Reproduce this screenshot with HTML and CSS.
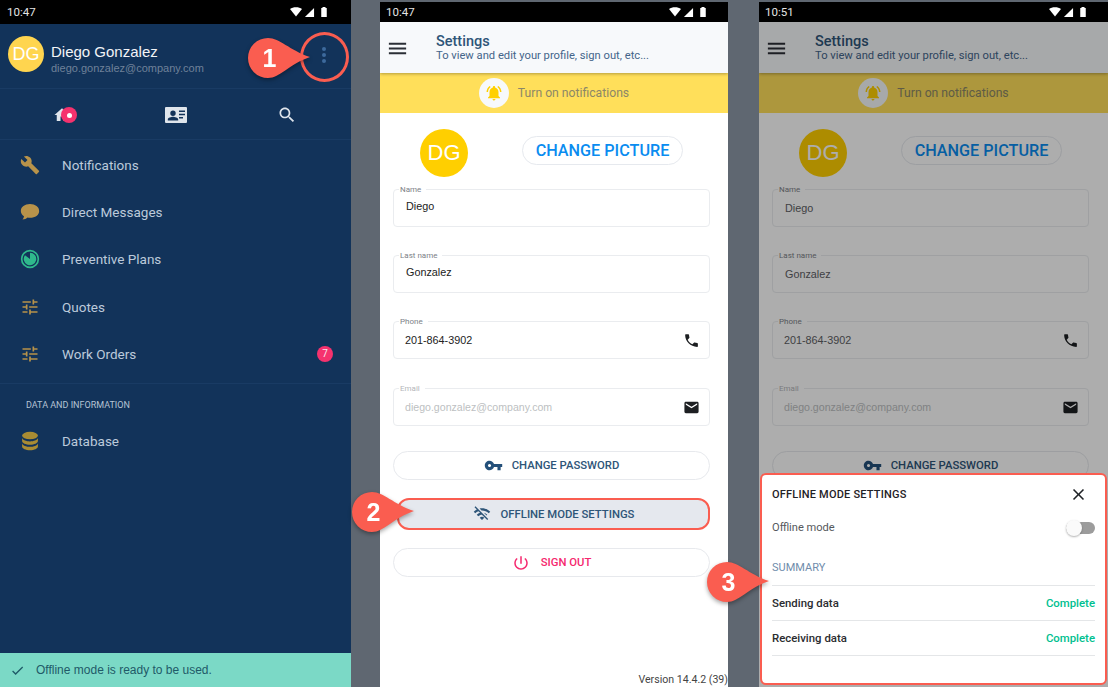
FILE: index.html
```html
<!DOCTYPE html>
<html lang="en">
<head>
<meta charset="utf-8">
<title>Offline mode settings</title>
<link rel="stylesheet" href="styles.css">
</head>
<body>
<svg class="defs" aria-hidden="true">
  <symbol id="i-wifi" viewBox="0 0 24 24"><path d="M12 21 0 6c6-5 18-5 24 0z"/></symbol>
  <symbol id="i-signal" viewBox="0 0 24 24"><path d="M22 2v20H2z"/></symbol>
  <symbol id="i-battery" viewBox="0 0 24 24"><path d="M9 2h6v2h2.500v18h-11V4H9z"/></symbol>
  <symbol id="i-home" viewBox="0 0 24 24"><path d="M10 20v-6h4v6h5v-8h3L12 3 2 12h3v8z"/></symbol>
  <symbol id="i-card" viewBox="0 0 24 24"><path fill-rule="evenodd" d="M2 4h20a1 1 0 0 1 1 1v14a1 1 0 0 1-1 1H2a1 1 0 0 1-1-1V5a1 1 0 0 1 1-1zm7 3.500a2.700 2.700 0 1 0 0 5.400a2.700 2.700 0 0 0 0-5.400zM3.800 17.500h10.400v-1c0-1.800-3.500-2.700-5.200-2.700s-5.200.9-5.200 2.700zM15 7.500v1.500h6V7.500zm0 3.300v1.500h6v-1.500zm0 3.300v1.500h4v-1.500z"/></symbol>
  <symbol id="i-search" viewBox="0 0 24 24"><path d="M15.500 14h-.79l-.28-.27C15.410 12.590 16 11.110 16 9.500 16 5.910 13.090 3 9.500 3S3 5.910 3 9.500 5.910 16 9.500 16c1.610 0 3.090-.59 4.230-1.570l.27.28v.79l5 4.990L20.490 19l-4.990-5zm-6 0C7.010 14 5 11.990 5 9.500S7.010 5 9.500 5 14 7.010 14 9.500 11.990 14 9.500 14z"/></symbol>
  <symbol id="i-wrench" viewBox="0 0 24 24"><path d="M22.700 19l-9.100-9.100c.9-2.300.4-5-1.500-6.900-2-2-5-2.400-7.400-1.300L9 6 6 9 1.600 4.700C.4 7.100.9 10.100 2.900 12.100c1.900 1.900 4.600 2.400 6.900 1.500l9.100 9.100c.4.4 1 .4 1.400 0l2.300-2.300c.5-.4.5-1.100.1-1.400z"/></symbol>
  <symbol id="i-chat" viewBox="0 0 24 24"><path d="M12 2.500c6.300 0 11 3.500 11 8.200s-4.700 8.200-11 8.200c-1 0-2-.1-2.900-.3-1.500 1.500-3.600 2.400-6.100 2.400 1-1.200 1.600-2.500 1.800-4C2.500 15.500 1 13.200 1 10.700c0-4.700 4.700-8.200 11-8.200z"/></symbol>
  <symbol id="i-timer" viewBox="0 0 24 24"><path fill-rule="evenodd" d="M12 1a11 11 0 1 1 0 22 11 11 0 0 1 0-22zm0 2a9 9 0 1 0 0 18 9 9 0 0 0 0-18z"/><path d="M12 4.500a7.500 7.500 0 1 1-6 3L12 12z"/></symbol>
  <symbol id="i-tune" viewBox="0 0 24 24"><path d="M3 17v2h6v-2H3zM3 5v2h10V5H3zm10 16v-2h8v-2h-8v-2h-2v6h2zM7 9v2H3v2h4v2h2V9H7zm14 4v-2H11v2h10zm-6-4h2V7h4V5h-4V3h-2v6z"/></symbol>
  <symbol id="i-db" viewBox="0 0 24 24"><ellipse cx="12" cy="5.500" rx="9.500" ry="4.500"/><path d="M2.500 8.500c1 2.700 5 4 9.500 4s8.500-1.300 9.500-4v3.500c0 2.500-4.300 4.500-9.500 4.500S2.500 14.500 2.500 12z"/><path d="M2.500 15c1 2.700 5 4 9.500 4s8.500-1.300 9.500-4v3.500c0 2.500-4.300 4.500-9.500 4.500s-9.500-2-9.500-4.500z"/></symbol>
  <symbol id="i-check" viewBox="0 0 24 24"><path d="M9 16.170L4.830 12l-1.420 1.410L9 19 21 7l-1.410-1.410z"/></symbol>
  <symbol id="i-menu" viewBox="0 0 24 24"><path d="M3 18h18v-2H3v2zm0-5h18v-2H3v2zm0-7v2h18V6H3z"/></symbol>
  <symbol id="i-bell" viewBox="0 0 24 24"><path d="M7.580 4.080L6.150 2.650C3.750 4.480 2.170 7.300 2.030 10.500h2c.15-2.650 1.510-4.970 3.550-6.420zm12.390 6.420h2c-.15-3.200-1.730-6.020-4.120-7.850l-1.420 1.430c2.020 1.450 3.390 3.770 3.540 6.420zM18 11c0-3.070-1.640-5.640-4.500-6.320V4c0-.83-.67-1.500-1.500-1.500s-1.500.67-1.500 1.500v.68C7.630 5.360 6 7.920 6 11v5l-2 2v1h16v-1l-2-2v-5zm-6 11c.14 0 .27-.01.4-.04.65-.14 1.180-.58 1.440-1.180.1-.24.15-.5.15-.78h-4c.01 1.100.9 2 2.010 2z"/></symbol>
  <symbol id="i-phone" viewBox="0 0 24 24"><path d="M6.620 10.790c1.440 2.830 3.760 5.140 6.590 6.590l2.200-2.200c.27-.27.67-.36 1.020-.24 1.120.37 2.330.57 3.570.57.55 0 1 .45 1 1V20c0 .55-.45 1-1 1-9.390 0-17-7.610-17-17 0-.55.45-1 1-1h3.500c.55 0 1 .45 1 1 0 1.250.2 2.450.57 3.570.11.35.03.74-.25 1.020l-2.200 2.200z"/></symbol>
  <symbol id="i-mail" viewBox="0 0 24 24"><path d="M20 4H4c-1.100 0-1.990.9-1.990 2L2 18c0 1.100.9 2 2 2h16c1.100 0 2-.9 2-2V6c0-1.100-.9-2-2-2zm0 4l-8 5-8-5V6l8 5 8-5v2z"/></symbol>
  <symbol id="i-key" viewBox="0 0 24 24"><path d="M12.650 10C11.830 7.670 9.610 6 7 6c-3.310 0-6 2.690-6 6s2.690 6 6 6c2.610 0 4.830-1.670 5.650-4H17v4h4v-4h2v-4H12.650zM7 14c-1.100 0-2-.9-2-2s.9-2 2-2 2 .9 2 2-.9 2-2 2z"/></symbol>
  <symbol id="i-wifioff" viewBox="0 0 24 24"><path d="M22.990 9C19.150 5.160 13.800 3.760 8.840 4.780l2.520 2.520c3.470-.17 6.990 1.050 9.630 3.700l2-2.010zm-4 4c-1.290-1.290-2.840-2.130-4.490-2.560l3.530 3.530.96-.97zM2 3.050L5.070 6.100C3.600 6.820 2.220 7.780 1 9l1.990 2c1.240-1.240 2.670-2.160 4.200-2.770l2.240 2.240C7.810 10.890 6.270 11.730 5 13v.01L6.990 15c1.360-1.360 3.140-2.040 4.920-2.060L18.980 20l1.270-1.260L3.290 1.790 2 3.050zM9 17l3 3 3-3c-1.650-1.660-4.340-1.660-6 0z"/></symbol>
  <symbol id="i-power" viewBox="0 0 24 24"><path d="M13 3h-2v10h2V3zm4.830 2.170l-1.420 1.420C17.990 7.860 19 9.810 19 12c0 3.870-3.130 7-7 7s-7-3.130-7-7c0-2.190 1.010-4.140 2.580-5.420L6.170 5.170C4.230 6.820 3 9.260 3 12c0 4.970 4.030 9 9 9s9-4.030 9-9c0-2.740-1.230-5.180-3.170-6.830z"/></symbol>
  <symbol id="i-close" viewBox="0 0 24 24"><path d="M19 6.410L17.590 5 12 10.590 6.410 5 5 6.410 10.590 12 5 17.590 6.410 19 12 13.410 17.590 19 19 17.590 13.410 12z"/></symbol>
  <symbol id="i-drop" viewBox="0 0 62 40"><path d="M20 0C32 0 41 12 62 19 41 26 32 40 20 40A20 20 0 0 1 20 0z"/></symbol>
</svg>

<main class="page">
  <section class="phone phone-drawer">
    <div class="status status-tall">
      <span class="status-time">10:47</span>
      <span class="status-icons">
        <svg class="st-wifi"><use href="#i-wifi"/></svg>
        <svg class="st-signal"><use href="#i-signal"/></svg>
        <svg class="st-batt"><use href="#i-battery"/></svg>
      </span>
    </div>
    <header class="drawer-head">
      <div class="drawer-avatar">DG</div>
      <div class="drawer-user">
        <div class="drawer-name">Diego Gonzalez</div>
        <div class="drawer-mail">diego.gonzalez@company.com</div>
      </div>
      <div class="more-dots"><i></i><i></i><i></i></div>
    </header>
    <div class="drawer-tabs">
      <span class="tab">
        <svg class="tab-icon tab-home"><use href="#i-home"/></svg>
        <span class="home-badge"><i></i></span>
      </span>
      <span class="tab"><svg class="tab-icon tab-card"><use href="#i-card"/></svg></span>
      <span class="tab"><svg class="tab-icon"><use href="#i-search"/></svg></span>
    </div>
    <nav class="nav">
      <a class="nav-item"><svg class="nav-icon tan"><use href="#i-wrench"/></svg><span>Notifications</span></a>
      <a class="nav-item"><svg class="nav-icon tan"><use href="#i-chat"/></svg><span>Direct Messages</span></a>
      <a class="nav-item"><svg class="nav-icon green"><use href="#i-timer"/></svg><span>Preventive Plans</span></a>
      <a class="nav-item"><svg class="nav-icon tan"><use href="#i-tune"/></svg><span>Quotes</span></a>
      <a class="nav-item"><svg class="nav-icon tan"><use href="#i-tune"/></svg><span>Work Orders</span><b class="count">7</b></a>
    </nav>
    <div class="nav-section">
      <div class="nav-label">DATA AND INFORMATION</div>
      <a class="nav-item"><svg class="nav-icon gold"><use href="#i-db"/></svg><span>Database</span></a>
    </div>
    <footer class="ready">
      <svg class="ready-icon"><use href="#i-check"/></svg>
      <span>Offline mode is ready to be used.</span>
    </footer>
  </section>

  <section class="phone phone-settings">
    <div class="status">
      <span class="status-time">10:47</span>
      <span class="status-icons">
        <svg class="st-wifi"><use href="#i-wifi"/></svg>
        <svg class="st-signal"><use href="#i-signal"/></svg>
        <svg class="st-batt"><use href="#i-battery"/></svg>
      </span>
    </div>
    <div class="screen">
      <header class="appbar">
        <svg class="menu-icon"><use href="#i-menu"/></svg>
        <div>
          <div class="appbar-title">Settings</div>
          <div class="appbar-sub">To view and edit your profile, sign out, etc...</div>
        </div>
      </header>
      <div class="banner">
        <span class="bell"><svg><use href="#i-bell"/></svg></span>
        <span>Turn on notifications</span>
      </div>
      <div class="profile">
        <div class="avatar">DG</div>
        <button class="pic-btn">CHANGE PICTURE</button>
      </div>
      <div class="form">
        <div class="field field-top"><label>Name</label><span class="value">Diego</span></div>
        <div class="field field-top"><label>Last name</label><span class="value">Gonzalez</span></div>
        <div class="field"><label>Phone</label><span class="value value-tight">201-864-3902</span><svg class="field-icon"><use href="#i-phone"/></svg></div>
        <div class="field field-off"><label>Email</label><span class="value value-tight">diego.gonzalez@company.com</span><svg class="field-icon"><use href="#i-mail"/></svg></div>
        <button class="pill pill-first"><svg class="pill-key"><use href="#i-key"/></svg>CHANGE PASSWORD</button>
        <button class="pill pill-hot"><svg class="pill-wifi"><use href="#i-wifioff"/></svg>OFFLINE MODE SETTINGS</button>
        <button class="pill pill-out"><svg class="pill-power"><use href="#i-power"/></svg>SIGN OUT</button>
      </div>
      <div class="version">Version 14.4.2 (39)</div>
    </div>
  </section>

  <section class="phone phone-sheet">
    <div class="status">
      <span class="status-time">10:51</span>
      <span class="status-icons">
        <svg class="st-wifi"><use href="#i-wifi"/></svg>
        <svg class="st-signal"><use href="#i-signal"/></svg>
        <svg class="st-batt"><use href="#i-battery"/></svg>
      </span>
    </div>
    <div class="screen">
      <header class="appbar">
        <svg class="menu-icon"><use href="#i-menu"/></svg>
        <div>
          <div class="appbar-title">Settings</div>
          <div class="appbar-sub">To view and edit your profile, sign out, etc...</div>
        </div>
      </header>
      <div class="banner">
        <span class="bell"><svg><use href="#i-bell"/></svg></span>
        <span>Turn on notifications</span>
      </div>
      <div class="profile">
        <div class="avatar">DG</div>
        <button class="pic-btn">CHANGE PICTURE</button>
      </div>
      <div class="form">
        <div class="field"><label>Name</label><span class="value value-dim">Diego</span></div>
        <div class="field"><label>Last name</label><span class="value value-dim">Gonzalez</span></div>
        <div class="field"><label>Phone</label><span class="value value-tight value-dim">201-864-3902</span><svg class="field-icon"><use href="#i-phone"/></svg></div>
        <div class="field field-off"><label>Email</label><span class="value value-tight">diego.gonzalez@company.com</span><svg class="field-icon"><use href="#i-mail"/></svg></div>
        <button class="pill pill-first"><svg class="pill-key"><use href="#i-key"/></svg>CHANGE PASSWORD</button>
      </div>
      <div class="scrim"></div>
      <aside class="sheet">
        <div class="sheet-head">
          <strong>OFFLINE MODE SETTINGS</strong>
          <svg class="sheet-close"><use href="#i-close"/></svg>
        </div>
        <div class="sheet-toggle">
          <span>Offline mode</span>
          <span class="switch"><i></i></span>
        </div>
        <div class="sheet-summary">SUMMARY</div>
        <div class="sheet-row"><b>Sending data</b><em>Complete</em></div>
        <div class="sheet-row"><b>Receiving data</b><em>Complete</em></div>
      </aside>
    </div>
  </section>

  <div class="ring"></div>
  <div class="callout callout-1"><svg><use href="#i-drop"/></svg><span>1</span></div>
  <div class="callout callout-2"><svg><use href="#i-drop"/></svg><span>2</span></div>
  <div class="callout callout-3"><svg><use href="#i-drop"/></svg><span>3</span></div>
</main>
</body>
</html>
```
FILE: styles.css
```css
* { box-sizing: border-box; }
html, body { margin: 0; padding: 0; }
body { font-family: "Roboto", "Liberation Sans", sans-serif; background: #5f6771; }
.defs { position: absolute; width: 0; height: 0; }
svg { display: block; fill: currentColor; }

.page { position: relative; width: 1108px; height: 687px; display: flex; justify-content: space-between; overflow: hidden; }
.phone { display: flex; flex-direction: column; height: 687px; }
.phone-drawer { width: 351px; background: #12335a; }
.phone-settings { width: 348px; margin-left: 29px; padding-top: 2px; }
.phone-sheet { width: 349px; margin-left: 31px; padding-top: 2px; }

.status { height: 20px; flex: none; background: #000; display: flex; align-items: center; justify-content: space-between; padding: 0 19px 0 6px; font-size: 11.500px; color: #e4e4e4; }
.status-tall { height: 24px; padding: 0 21px 0 7px; }
.status-icons { display: flex; align-items: center; gap: 2px; color: #fff; }
.st-wifi { width: 12px; height: 12px; }
.st-signal { width: 11px; height: 11px; }
.st-batt { width: 12px; height: 12px; margin-left: 1px; }

.drawer-head { height: 65px; flex: none; display: flex; align-items: center; padding-left: 8px; border-bottom: 1px solid #193b64; }
.drawer-avatar { width: 36px; height: 36px; border-radius: 50%; background: #ffd54f; color: #fff; display: flex; align-items: center; justify-content: center; font: 18px "Liberation Sans", sans-serif; margin-top: -4px; }
.drawer-user { margin-left: 7px; font-family: "Liberation Sans", sans-serif; margin-top: 7px; }
.drawer-name { font-size: 15px; color: #f2f4f7; line-height: 18px; }
.drawer-mail { font-size: 11px; color: #6f8199; line-height: 15px; }
.more-dots { margin-left: auto; margin-right: 25px; display: flex; flex-direction: column; gap: 2px; margin-top: -2px; }
.more-dots i { width: 4px; height: 4px; border-radius: 50%; background: #3d6a9c; }

.drawer-tabs { height: 51px; flex: none; display: grid; grid-template-columns: repeat(3, 111px); justify-content: center; align-items: center; padding-top: 2px; border-bottom: 1px solid #193b64; }
.tab { position: relative; display: flex; justify-content: center; color: #dfe5ec; }
.tab-icon { width: 20px; height: 20px; }
.tab-home { width: 18px; height: 18px; margin-left: -5px; }
.tab-card { width: 24px; height: 24px; }
.home-badge { position: absolute; left: 52px; top: 1px; width: 16px; height: 16px; border-radius: 50%; background: #f5326e; display: flex; align-items: center; justify-content: center; }
.home-badge i { width: 5px; height: 5px; border-radius: 50%; background: #fff; }

.nav { padding: 1px 0 6px; border-bottom: 1px solid #193b64; }
.nav-item { height: 47.300px; display: flex; align-items: center; font-size: 13.500px; color: #bccadb; padding-right: 18px; }
.nav-icon { width: 20px; height: 20px; margin: 0 22px 0 20px; flex: none; }
.tan { color: #b8934a; }
.green { color: #2fb98c; }
.gold { color: #a98c33; }
.count { margin-left: auto; width: 16px; height: 16px; border-radius: 50%; background: #f5326e; color: #f5e6ec; font: 400 10px "Roboto", sans-serif; display: flex; align-items: center; justify-content: center; }
.nav-section { padding-top: 11px; }
.nav-label { font-size: 9px; line-height: 20px; color: #b5c3d4; padding-left: 26px; height: 22px; }

.ready { margin-top: auto; height: 34px; flex: none; background: #7bd9c6; color: #1f5a68; display: flex; align-items: center; font: 12px "Liberation Sans", sans-serif; padding-left: 10px; }
.ready-icon { width: 15px; height: 15px; margin-right: 11px; }

.screen { position: relative; flex: 1; background: #fff; display: flex; flex-direction: column; overflow: hidden; }
.appbar { height: 51px; flex: none; display: flex; align-items: center; background: #f7f9fb; box-shadow: 0 1px 3px rgba(0, 0, 0, .3); position: relative; padding-left: 6px; }
.menu-icon { width: 23px; height: 23px; margin-right: 27px; color: #2b2f36; margin-top: 1px; }
.appbar-title { font-size: 14.500px; font-weight: 500; color: #2e5578; line-height: 15px; margin-top: 2px; }
.appbar-sub { font-size: 11.200px; color: #44658a; line-height: 14px; }
.banner { height: 40px; flex: none; background: #ffdf5a; display: flex; align-items: center; justify-content: center; gap: 9px; color: #8c8768; font-size: 12.200px; }
.bell { width: 30px; height: 30px; border-radius: 50%; background: #f7f9fb; color: #ffd000; display: flex; align-items: center; justify-content: center; }
.bell svg { width: 18px; height: 18px; }
.profile { height: 76px; flex: none; display: flex; align-items: flex-start; padding: 16px 0 0 40px; }
.avatar { width: 48px; height: 48px; border-radius: 50%; background: #ffcf00; color: #fff; display: flex; align-items: center; justify-content: center; font: 22px "Liberation Sans", sans-serif; }
.pic-btn { margin: 7px 0 0 54px; width: 161px; height: 29px; border-radius: 15px; border: 1px solid #e6e9ee; background: #fff; color: #0a8cf0; font: 500 16.200px "Roboto", sans-serif; padding: 0 0 1px; }

.form { display: flex; flex-direction: column; width: 317px; margin-left: 13px; }
.field { position: relative; height: 38px; border: 1px solid #eaecef; border-radius: 4px; margin-bottom: 28px; display: flex; align-items: center; padding: 0 11px; flex: none; }
.field label { position: absolute; left: 5px; top: -5px; padding: 0 5px 0 1px; background: #fff; font-size: 8px; line-height: 10px; color: #7d8187; }
.field-top { padding-bottom: 4px; }
.field-off { margin-top: 1px; }
.field-off label { color: #b4b6ba; }
.value { font: 10.800px "Liberation Sans", sans-serif; color: #222; margin-left: 1px; }
.value-tight { margin-left: 0; padding-bottom: 1px; }
.value-dim { color: #5d6064; }
.field-off .value { color: #bdbfc2; font-size: 10.600px; }
.field-icon { margin-left: auto; width: 17px; height: 17px; color: #1d1f22; margin-right: -2px; }

.pill { display: flex; align-items: center; justify-content: center; height: 29px; border: 1px solid #e7e9ed; border-radius: 15px; background: #fff; color: #2e5578; font: 500 11.300px "Roboto", sans-serif; padding: 0; flex: none; }
.pill-first { margin-top: -3px; }
.pill-hot { margin: 18px 0 0 4px; height: 32px; border: 2px solid #fa5d50; border-radius: 12px; background: #e5e8ee; }
.pill-out { margin-top: 18px; color: #f5286e; }
.pill-key { width: 19px; height: 19px; margin-right: 9px; color: #24507a; }
.pill-wifi { width: 18px; height: 18px; margin-right: 10px; }
.pill-power { width: 18px; height: 18px; margin-right: 11px; }

.version { margin-top: auto; text-align: right; font-size: 10.600px; line-height: 14px; color: #444; }

.scrim { position: absolute; inset: 0; background: rgba(0, 0, 0, .32); }
.sheet { position: absolute; left: 1px; right: 1px; top: 451px; height: 212px; background: #fff; border: 2px solid #fa5d50; border-radius: 6px; padding: 0 10px; font-size: 12px; }
.sheet-head { display: flex; align-items: center; justify-content: space-between; height: 39px; }
.sheet-head strong { font-size: 11px; font-weight: 500; color: #1f2226; letter-spacing: .2px; }
.sheet-close { width: 19px; height: 19px; color: #1f2226; margin-right: 7px; }
.sheet-toggle { display: flex; align-items: center; justify-content: space-between; height: 29px; color: #55585c; font-size: 11.100px; padding-bottom: 2px; }
.switch { position: relative; width: 29px; height: 12px; border-radius: 6px; background: #9c9c9c; display: block; }
.switch i { position: absolute; left: 0; top: -2px; width: 16px; height: 16px; border-radius: 50%; background: #fafafa; box-shadow: 0 1px 2px rgba(0, 0, 0, .3); }
.sheet-summary { height: 31px; margin-top: 12px; border-bottom: 1px solid #e4e6e8; color: #6f8cab; font-size: 11px; line-height: 26px; }
.sheet-row { height: 35px; display: flex; align-items: center; justify-content: space-between; border-bottom: 1px solid #e4e6e8; font-size: 11.400px; color: #2a2c2f; }
.sheet-row b { font-weight: 500; }
.sheet-row em { font-style: normal; font-weight: 500; color: #00c08f; }

.ring { position: absolute; left: 300px; top: 32px; width: 49px; height: 50px; border: 3px solid #fa5d50; border-radius: 50%; }
.callout { position: absolute; width: 62px; height: 40px; color: #fa5d50; filter: drop-shadow(0 2px 2px rgba(0, 0, 0, .35)); }
.callout svg { width: 62px; height: 40px; }
.callout span { position: absolute; left: 0; top: 0; width: 43px; text-align: center; font: 700 25px/40px "Liberation Sans", sans-serif; color: #fff; }
.callout-1 { left: 248px; top: 38px; }
.callout-2 { left: 352px; top: 492px; }
.callout-3 { left: 707px; top: 562px; }
```
